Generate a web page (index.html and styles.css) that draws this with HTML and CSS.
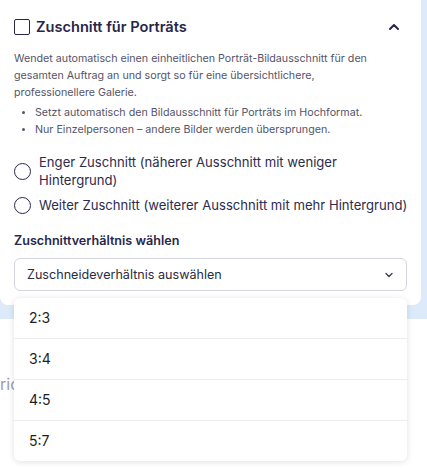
FILE: index.html
```html
<!DOCTYPE html>
<html lang="de">
<head>
    <meta charset="UTF-8">
    <title>Zuschnitt für Porträts</title>
    <link rel="stylesheet" href="styles.css">
</head>
<body>
    <div class="backdrop">
        <section class="card">
            <div class="card-header">
                <label class="check">
                    <span class="check-box"></span>
                    <span class="card-title">Zuschnitt für Porträts</span>
                </label>
                <svg class="chevron-up" width="12" height="8" viewBox="0 0 12 8">
                    <path d="M2 6 L6 2 L10 6" fill="none" stroke="#28264a" stroke-width="2" stroke-linecap="round" stroke-linejoin="round"/>
                </svg>
            </div>

            <p class="desc">Wendet automatisch einen einheitlichen Porträt-Bildausschnitt für den gesamten Auftrag an und sorgt so für eine übersichtlichere, professionellere Galerie.</p>

            <ul class="points">
                <li>Setzt automatisch den Bildausschnitt für Porträts im Hochformat.</li>
                <li>Nur Einzelpersonen – andere Bilder werden übersprungen.</li>
            </ul>

            <div class="options">
                <label class="option">
                    <span class="radio"></span>
                    <span>Enger Zuschnitt (näherer Ausschnitt mit weniger Hintergrund)</span>
                </label>
                <label class="option">
                    <span class="radio"></span>
                    <span>Weiter Zuschnitt (weiterer Ausschnitt mit mehr Hintergrund)</span>
                </label>
            </div>

            <div class="field">
                <div class="field-label">Zuschnittverhältnis wählen</div>
                <div class="select">
                    <span>Zuschneideverhältnis auswählen</span>
                    <svg width="10" height="6" viewBox="0 0 10 6">
                        <path d="M2 1.5 L5 4.5 L8 1.5" fill="none" stroke="#3a3a4a" stroke-width="1.3" stroke-linecap="round" stroke-linejoin="round"/>
                    </svg>
                </div>
                <ul class="menu">
                    <li>2:3</li>
                    <li>3:4</li>
                    <li>4:5</li>
                    <li>5:7</li>
                </ul>
            </div>
        </section>
    </div>

    <p class="below">ric</p>
</body>
</html>
```

FILE: styles.css
```css
body {
    font-family: Inter, "Noto Sans", sans-serif;
    background-color: #ffffff;
    margin: 0;
    padding: 0;
    min-height: 468px;
    color: #28264a;
}

.backdrop {
    background-color: #dceafa;
    padding: 0 6px 14px 0;
}

.card {
    background-color: #ffffff;
    border-radius: 0 0 8px 8px;
    padding: 17px 14px 14px 14px;
}

.card-header {
    display: flex;
    align-items: center;
    justify-content: space-between;
    height: 20px;
}

.check {
    display: flex;
    align-items: center;
    gap: 6px;
}

.check-box {
    width: 14px;
    height: 14px;
    border: 1.5px solid #28264a;
    border-radius: 2px;
}

.card-title {
    font-size: 14.6px;
    font-weight: 600;
}

.chevron-up {
    margin-right: 7px;
}

.desc {
    margin: 13px 0 0 0;
    padding-right: 20px;
    font-size: 10.7px;
    line-height: 17px;
    color: #55546a;
}

.points {
    margin: 3px 0 0 0;
    padding-left: 21px;
    font-size: 10.7px;
    line-height: 17px;
    color: #55546a;
}

.points li::marker {
    font-size: 9px;
}

.options {
    margin-top: 15px;
    display: flex;
    flex-direction: column;
    gap: 7px;
}

.option {
    display: flex;
    align-items: center;
    gap: 8px;
    margin-right: -6px;
    font-size: 13.1px;
    line-height: 18px;
    color: #2e2c4e;
}

.radio {
    flex: none;
    width: 15px;
    height: 15px;
    border: 1.3px solid #28264a;
    border-radius: 50%;
}

.field {
    position: relative;
    margin-top: 19px;
}

.field-label {
    font-size: 12.6px;
    font-weight: 600;
    line-height: 16px;
    margin-bottom: 9px;
}

.select {
    display: flex;
    align-items: center;
    justify-content: space-between;
    height: 31px;
    padding: 0 12px;
    border: 1px solid #d4d4de;
    border-radius: 6px;
    font-size: 12.6px;
    color: #2c2c3e;
}

.menu {
    position: absolute;
    left: 0;
    right: 0;
    top: 65px;
    margin: 0;
    padding: 0;
    list-style: none;
    background-color: #ffffff;
    border-radius: 6px;
    box-shadow: 0 1px 6px rgba(0, 0, 0, 0.12);
    z-index: 2;
}

.menu li {
    height: 40px;
    line-height: 40px;
    padding-left: 15px;
    font-size: 14px;
    color: #1f1f24;
    border-bottom: 1px solid #ececf0;
}

.menu li:last-child {
    border-bottom: none;
}

.below {
    margin: 55px 0 0 0;
    font-size: 16px;
    color: #9a9ca6;
}
```
